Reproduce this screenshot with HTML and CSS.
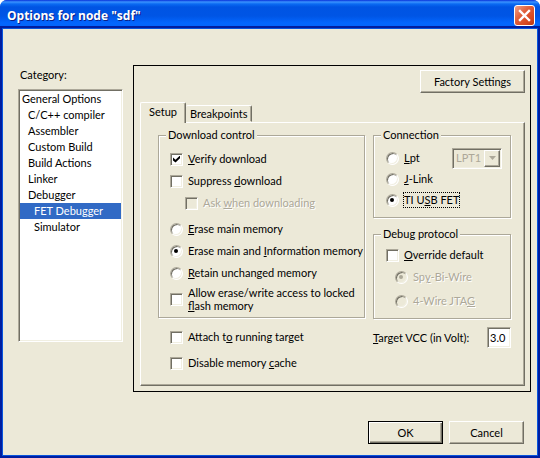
FILE: index.html
```html
<!DOCTYPE html>
<html lang="en">
<head>
<meta charset="utf-8">
<title>Options for node "sdf"</title>
<link rel="stylesheet" href="styles.css">
</head>
<body>
<main class="window">
  <header class="titlebar">
    <h1 class="title">Options for node "sdf"</h1>
    <button class="close" type="button" aria-label="Close">
      <svg viewBox="0 0 21 21" width="21" height="21" aria-hidden="true"><path d="M6 6l9 9M15 6l-9 9" stroke="#fff" stroke-width="2.4" stroke-linecap="square"/></svg>
    </button>
  </header>
  <form class="body">
    <div class="columns">
      <div class="categories">
        <label class="category-label" for="category">Category:</label>
        <select class="listbox" id="category" size="15">
          <option>General Options</option>
          <option class="level1">C/C++ compiler</option>
          <option class="level1">Assembler</option>
          <option class="level1">Custom Build</option>
          <option class="level1">Build Actions</option>
          <option class="level1">Linker</option>
          <option class="level1">Debugger</option>
          <option class="level2" selected>FET Debugger</option>
          <option class="level2">Simulator</option>
        </select>
      </div>
      <section class="panel">
        <button class="button factory" type="button">Factory Settings</button>
        <div class="tabs" role="tablist">
          <button class="tab active" type="button" role="tab" aria-selected="true">Setup</button>
          <button class="tab" type="button" role="tab" aria-selected="false">Breakpoints</button>
        </div>
        <div class="page" role="tabpanel">
          <div class="left">
            <fieldset class="group download">
              <legend>Download control</legend>
              <label class="row"><input class="check" type="checkbox" checked><span><u>V</u>erify download</span></label>
              <label class="row"><input class="check" type="checkbox"><span>Suppress <u>d</u>ownload</span></label>
              <label class="row nested disabled"><input class="check" type="checkbox" disabled><span>Ask <u>w</u>hen downloading</span></label>
              <div class="radios">
                <label class="row"><input class="radio" type="radio" name="erase"><span><u>E</u>rase main memory</span></label>
                <label class="row"><input class="radio" type="radio" name="erase" checked><span>Erase main and <u>I</u>nformation memory</span></label>
                <label class="row"><input class="radio" type="radio" name="erase"><span><u>R</u>etain unchanged memory</span></label>
              </div>
              <label class="row tall"><input class="check" type="checkbox"><span>Allow erase/write access to locked <u>f</u>lash memory</span></label>
            </fieldset>
            <div class="extras">
              <label class="row"><input class="check" type="checkbox"><span>Attach t<u>o</u> running target</span></label>
              <label class="row"><input class="check" type="checkbox"><span>Disable memory <u>c</u>ache</span></label>
            </div>
          </div>
          <div class="right">
            <fieldset class="group connection">
              <legend>Connection</legend>
              <div class="lpt">
                <label class="row"><input class="radio" type="radio" name="connection"><span><u>L</u>pt</span></label>
                <span class="combo">
                  <select class="port" aria-label="Port" disabled><option>LPT1</option></select>
                  <span class="arrow"><svg viewBox="0 0 7 4" width="7" height="4" aria-hidden="true"><path d="M0 0h7L3.500 4z" fill="#aca899"/></svg></span>
                </span>
              </div>
              <label class="row"><input class="radio" type="radio" name="connection"><span><u>J</u>-Link</span></label>
              <label class="row"><input class="radio" type="radio" name="connection" checked><span class="focused">TI U<u>S</u>B FET</span></label>
            </fieldset>
            <fieldset class="group protocol">
              <legend>Debug protocol</legend>
              <label class="row"><input class="check" type="checkbox"><span><u>O</u>verride default</span></label>
              <label class="row inset disabled"><input class="radio" type="radio" name="protocol" checked disabled><span>Sp<u>y</u>-Bi-Wire</span></label>
              <label class="row inset disabled"><input class="radio" type="radio" name="protocol" disabled><span>4-Wire JTA<u>G</u></span></label>
            </fieldset>
            <div class="voltage">
              <label for="vcc"><u>T</u>arget VCC (in Volt):</label>
              <input class="vcc" id="vcc" type="text" value="3.0">
            </div>
          </div>
        </div>
      </section>
    </div>
    <footer class="actions">
      <button class="button default" type="submit">OK</button>
      <button class="button" type="button">Cancel</button>
    </footer>
  </form>
</main>
</body>
</html>
```
FILE: styles.css
```css
* { box-sizing: border-box; }

body {
  margin: 0;
  background: #fff;
  color: #000;
  font: 11px/14px Lato, "Liberation Sans", sans-serif;
}

button, input, select { font: inherit; color: inherit; margin: 0; }
label { white-space: nowrap; }
u { text-underline-offset: 1px; text-decoration-thickness: 1px; }

.window {
  display: flex;
  flex-direction: column;
  min-height: 100vh;
  border-radius: 7px 7px 0 0;
  background: #0044dd;
  overflow: hidden;
}

/* Title bar */
.titlebar {
  display: flex;
  align-items: center;
  justify-content: space-between;
  height: 29px;
  padding: 2px 5px 0 7px;
  background: linear-gradient(#0831d9 0, #3a93ff 2px, #0a6af2 4px, #0054e3 7px, #0055e5 16px, #0366fe 23px, #0365fa 26px, #0047cc 28px, #0036b0 29px);
}

.title {
  margin: 0;
  color: #fff;
  font: bold 12px/18px "Open Sans", "Noto Sans", sans-serif;
  text-shadow: 1px 1px 0 #0b1f86;
}

.close {
  display: flex;
  width: 21px;
  height: 21px;
  padding: 0;
  border: 1px solid #fff;
  border-radius: 3px;
  background: linear-gradient(135deg, #f0a088, #e0603c 40%, #d84820 75%, #b83810);
}

.close svg { margin: -1px; }

.body {
  display: flex;
  flex: 1;
  flex-direction: column;
  justify-content: space-between;
  margin: 0 3px 3px;
  padding: 36px 6px 11px 15px;
  background: #ece9d8;
  box-shadow: 0 0 0 1px #0855dd, 0 0 0 3px #001ea0;
}

.columns { display: flex; gap: 10px; }

/* Category list */
.categories {
  display: flex;
  flex: 0 0 105px;
  flex-direction: column;
  gap: 7px;
  padding-top: 3px;
}

.category-label { padding-left: 2px; }

.listbox {
  height: 253px;
  padding: 1px;
  border: 1px solid;
  border-color: #aca899 #fff #fff #aca899;
  border-radius: 0;
  background: #fff;
  box-shadow: inset 1px 1px 0 #716f64, inset -1px -1px 0 #f1efe2;
  overflow: hidden;
  outline: none;
}

.listbox option { min-height: 16px; padding: 1px 2px; line-height: 14px; }
.listbox .level1 { padding-left: 8px; }
.listbox .level2 { padding-left: 14px; }
.listbox option:checked {
  background: #316ac5 linear-gradient(#316ac5, #316ac5);
  color: #fff !important;
}

/* Buttons */
.button {
  width: 75px;
  height: 23px;
  padding: 0;
  border: 1px solid;
  border-color: #fff #716f64 #716f64 #fff;
  background: #ece9d8;
  box-shadow: inset -1px -1px 0 #aca899;
}

.button.default {
  border-color: #000;
  box-shadow: inset 1px 1px 0 #fff, inset -1px -1px 0 #716f64, inset -2px -2px 0 #aca899;
}

.actions { display: flex; justify-content: flex-end; gap: 6px; padding-right: 7px; }

/* Settings panel */
.panel {
  display: flex;
  flex: 1;
  flex-direction: column;
  min-width: 0;
  padding: 4px 5px 5px 6px;
  border: 1px solid #000;
}

.button.factory { align-self: flex-end; width: 105px; }

.tabs { display: flex; align-items: flex-end; margin-top: 9px; }

.tab {
  height: 17px;
  padding: 0 4px;
  border: 1px solid;
  border-color: #fff #716f64 transparent #fff;
  border-left: 0;
  border-radius: 2px 2px 0 0;
  background: #ece9d8;
  box-shadow: inset -1px 0 0 #aca899;
}

.tab.active {
  position: relative;
  height: 21px;
  margin-bottom: -1px;
  padding: 0 8px 2px;
  border-left: 1px solid #fff;
  border-bottom: 0;
}

.page {
  display: flex;
  justify-content: space-between;
  gap: 8px;
  padding: 5px 13px 14px 17px;
  border: 1px solid;
  border-color: #fff #716f64 #716f64 #fff;
  box-shadow: inset -1px -1px 0 #aca899;
}

.left { flex: 1 0 206px; }
.right { flex: 0 0 138px; }

.group {
  display: flex;
  flex-direction: column;
  gap: 6px;
  min-width: 0;
  margin: 0;
  border: 1px solid #aca899;
  box-shadow: 1px 1px 0 #fff, inset 1px 1px 0 #fff;
}

.group legend {
  margin-left: -4px;
  padding: 0 2px;
  background: #ece9d8;
}

.download { padding: 9px 0 5px 11px; }
.connection { gap: 5px; padding: 8px 8px 9px 12px; }
.protocol { margin-top: 9px; padding: 6px 8px 9px 12px; }
.protocol legend, .connection legend { margin-left: -5px; }

.row { display: flex; align-items: center; gap: 5px; min-height: 16px; }
.row.nested { padding-left: 15px; }
.row.inset { padding-left: 9px; }
.row.inset + .inset { margin-top: 2px; }
.row.tall { line-height: 13px; white-space: normal; }
.row.disabled { color: #aca899; text-shadow: 1px 1px 0 #fff; }

.radios { display: flex; flex-direction: column; gap: 6px; margin: 4px 0 -1px; }

.extras {
  display: flex;
  flex-direction: column;
  gap: 10px;
  padding: 11px 0 0 12px;
}

/* Check boxes and radio buttons */
.check, .radio {
  position: relative;
  flex: none;
  width: 13px;
  height: 13px;
  border: 1px solid;
  border-color: #aca899 #fff #fff #aca899;
  background: #fff;
  box-shadow: inset 1px 1px 0 #716f64, inset -1px -1px 0 #f1efe2;
  appearance: none;
}

.check:disabled, .radio:disabled { background: #ece9d8; }

.check:checked::before {
  content: "";
  position: absolute;
  inset: 2px;
  background: #000;
  clip-path: polygon(0 28%, 36% 62%, 100% 0, 100% 40%, 36% 100%, 0 70%);
}

.radio { border-radius: 50%; }

.radio:checked::before {
  content: "";
  position: absolute;
  inset: 3px;
  margin: 0 1px 1px 0;
  border-radius: 50%;
  background: #000;
}

.radio:checked:disabled::before { background: #aca899; }

.focused { outline: 1px dotted #000; }

/* Port drop-down */
.lpt { display: flex; align-items: center; justify-content: space-between; height: 16px; }
.combo { position: relative; display: flex; }

.port {
  width: 50px;
  height: 21px;
  padding: 0 3px;
  border: 1px solid;
  border-color: #aca899 #fff #fff #aca899;
  border-radius: 0;
  background: #ece9d8;
  box-shadow: inset 1px 1px 0 #716f64, inset -1px -1px 0 #f1efe2;
  color: #aca899;
  opacity: 1;
  appearance: none;
}

.arrow {
  position: absolute;
  inset: 2px 2px 2px auto;
  display: flex;
  align-items: center;
  justify-content: center;
  width: 16px;
  border: 1px solid;
  border-color: #fff #716f64 #716f64 #fff;
  background: #ece9d8;
  box-shadow: inset -1px -1px 0 #aca899;
  pointer-events: none;
}

/* Voltage */
.voltage {
  display: flex;
  align-items: center;
  justify-content: space-between;
  margin-top: 8px;
}

.vcc {
  width: 24px;
  height: 21px;
  padding: 0 2px;
  border: 1px solid;
  border-color: #aca899 #fff #fff #aca899;
  background: #fff;
  box-shadow: inset 1px 1px 0 #716f64, inset -1px -1px 0 #f1efe2;
}
```
